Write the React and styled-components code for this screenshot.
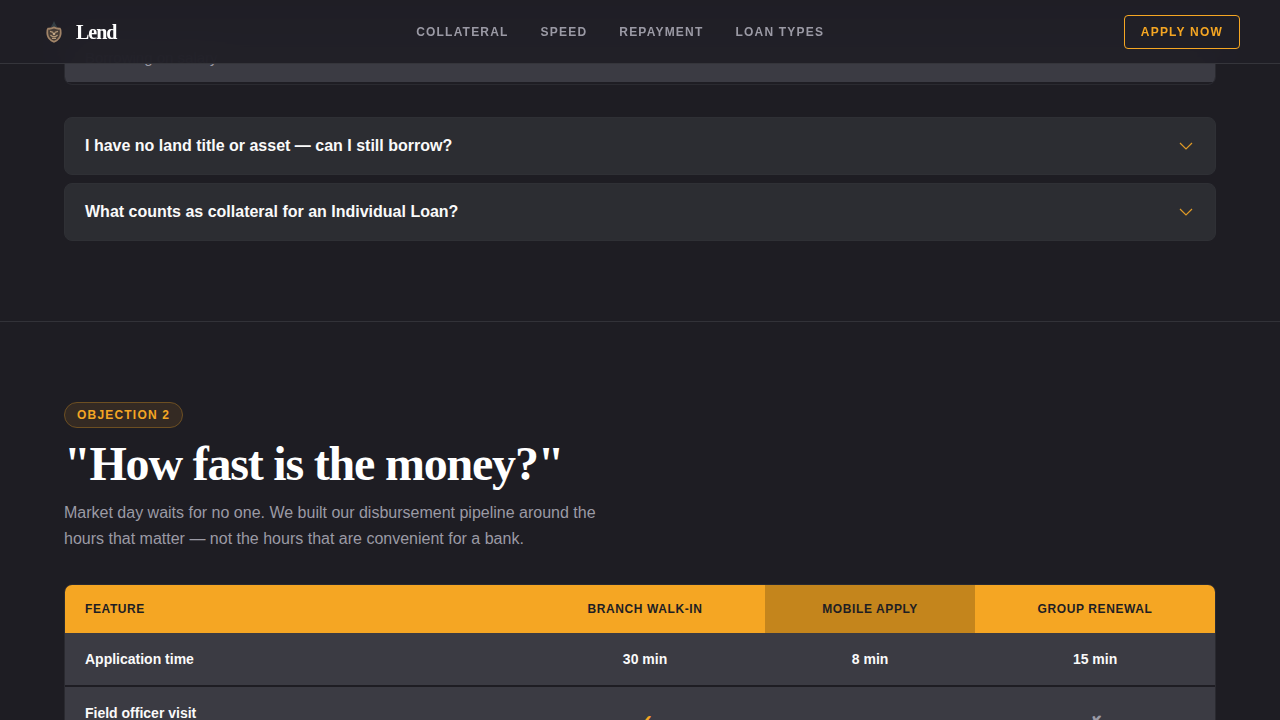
import React, { useState } from "react";
import styled, { createGlobalStyle } from "styled-components";

const faqs = [
    { q: "I have no land title or asset — can I still borrow?", a: "Yes. Group loans are backed by your fellow members." },
    { q: "What counts as collateral for an Individual Loan?", a: "Land titles, vehicles, equipment and market stock." },
];

const App = () => {
    const [open, setOpen] = useState(null);

    return(
    <>
        <GlobalStyle />
        <Header>
            <Brand href="#top">
                <Crest />
                Lend
            </Brand>
            <Nav>
                <NavLink href="#collateral">Collateral</NavLink>
                <NavLink href="#speed">Speed</NavLink>
                <NavLink href="#repayment">Repayment</NavLink>
                <NavLink href="#types">Loan Types</NavLink>
            </Nav>
            <ApplyLink href="#apply">Apply Now</ApplyLink>
        </Header>
        <main>
            <Section id="collateral" $first>
                <TableWrap>
                    <Table>
                        <tbody>
                            <tr>
                                <RowHead scope="row" $muted>Borrowing on salary</RowHead>
                            </tr>
                        </tbody>
                    </Table>
                </TableWrap>
                <FaqList>
                    {faqs.map((faq, i) => (
                        <FaqItem key={faq.q}>
                            <FaqButton
                                type="button"
                                aria-expanded={open === i}
                                onClick={() => setOpen(open === i ? null : i)}
                            >
                                {faq.q}
                                <Chevron viewBox="0 0 18 18" $open={open === i} aria-hidden="true">
                                    <path d="M3 6 L9 12 L15 6" />
                                </Chevron>
                            </FaqButton>
                            {open === i && <FaqAnswer>{faq.a}</FaqAnswer>}
                        </FaqItem>
                    ))}
                </FaqList>
            </Section>
            <Section id="speed">
                <Badge>Objection 2</Badge>
                <Title>"How fast is the money?"</Title>
                <Lead>
                    Market day waits for no one. We built our disbursement pipeline around the
                    hours that matter — not the hours that are convenient for a bank.
                </Lead>
                <TableWrap>
                    <Table>
                        <thead>
                            <tr>
                                <ColHead scope="col" $left>Feature</ColHead>
                                <ColHead scope="col">Branch Walk-in</ColHead>
                                <ColHead scope="col" $featured>Mobile Apply</ColHead>
                                <ColHead scope="col">Group Renewal</ColHead>
                            </tr>
                        </thead>
                        <tbody>
                            <tr>
                                <RowHead scope="row">Application time</RowHead>
                                <Cell>30 min</Cell>
                                <Cell>8 min</Cell>
                                <Cell>15 min</Cell>
                            </tr>
                            <tr>
                                <RowHead scope="row">
                                    Field officer visit
                                    <Note>First loan only</Note>
                                </RowHead>
                                <Cell><Mark $yes>✓</Mark></Cell>
                                <Cell><Mark>–</Mark></Cell>
                                <Cell><Mark>✗</Mark></Cell>
                            </tr>
                        </tbody>
                    </Table>
                </TableWrap>
            </Section>
        </main>
    </>
    );
}

const Crest = () => (
    <CrestSvg viewBox="0 0 28 28" aria-hidden="true">
        <path d="M14 3 L15.4 6 L17.4 9.5 H10.6 L12.6 6 Z" fill="#333e44" />
        <path d="M14 8.4 Q17 10 20.4 9.8 Q21.8 11 21.6 15 C21.4 19.6 18.6 23 14 24.8 C9.4 23 6.6 19.6 6.4 15 Q6.2 11 7.6 9.8 Q11 10 14 8.4 Z" fill="#a18468" />
        <path d="M14 10.6 Q17 11.8 19.6 11.6 Q20 13 19.8 15.4 C19.6 18.8 17.4 21.4 14 22.8 C10.6 21.4 8.4 18.8 8.2 15.4 Q8 13 8.4 11.6 Q11 11.8 14 10.6 Z" fill="#463c35" />
        <path d="M10 13.4 L13 14.4 M18 13.4 L15 14.4 M10.4 17 Q14 20.4 17.6 17 M12 20.4 H16" fill="none" stroke="#b39878" strokeWidth="1.2" />
        <circle cx="14" cy="15.8" r="1.4" fill="#c5aa88" />
    </CrestSvg>
);

const GlobalStyle = createGlobalStyle`
    *, *::before, *::after {
        box-sizing: border-box;
    }
    body {
        margin: 0;
        background: #1e1d23;
        color: #fafafa;
        font-family: "Liberation Sans", Arial, sans-serif;
        font-size: 16px;
    }
`;

const Header = styled.header`
    position: fixed;
    top: 0;
    left: 0;
    right: 0;
    z-index: 10;
    height: 64px;
    display: flex;
    align-items: center;
    justify-content: space-between;
    padding: 0 40px;
    background: rgba(32, 31, 38, 0.95);
    backdrop-filter: blur(16px);
    border-bottom: 1px solid #35353b;
`;

const Brand = styled.a`
    display: flex;
    align-items: center;
    gap: 8px;
    color: #fff;
    font-family: "Liberation Serif", "Times New Roman", serif;
    font-size: 20px;
    font-weight: 700;
    line-height: 24px;
    letter-spacing: -0.05em;
    text-decoration: none;
`;

const CrestSvg = styled.svg`
    width: 28px;
    height: 28px;
`;

const Nav = styled.nav`
    display: flex;
    gap: 32px;
`;

const NavLink = styled.a`
    color: #9b9aa5;
    font-size: 12px;
    font-weight: 700;
    letter-spacing: 0.1em;
    text-transform: uppercase;
    text-decoration: none;
`;

const ApplyLink = styled(NavLink)`
    padding: 9px 16px;
    border: 1px solid #f5a623;
    border-radius: 4px;
    color: #f5a623;
    line-height: 14px;
`;

const Section = styled.section`
    padding: ${(p) => (p.$first ? "29px" : "80px")} 64px 80px;
    border-bottom: 1px solid #323238;
`;

const Badge = styled.span`
    display: block;
    width: fit-content;
    padding: 5px 12px;
    border: 1px solid #6d4f22;
    border-radius: 13px;
    background: #342a23;
    color: #f5a623;
    font-size: 12px;
    font-weight: 700;
    line-height: 14px;
    letter-spacing: 0.1em;
    text-transform: uppercase;
`;

const Title = styled.h2`
    margin: 12px 0;
    color: #fff;
    font-family: "Liberation Serif", "Times New Roman", serif;
    font-size: 48px;
    line-height: 48px;
    letter-spacing: -0.025em;
`;

const Lead = styled.p`
    max-width: 560px;
    margin: 0 0 32px;
    color: #9b9aa5;
    line-height: 26px;
`;

const TableWrap = styled.div`
    overflow: hidden;
    border: 1px solid #2a2a30;
    border-radius: 8px;
`;

const Table = styled.table`
    width: 100%;
    border-spacing: 0;
    font-size: 14px;
    line-height: 20px;
`;

const ColHead = styled.th`
    width: ${(p) => (p.$left ? "40%" : "auto")};
    padding: 14px 20px;
    background: ${(p) => (p.$featured ? "#c4851c" : "#f5a623")};
    color: #1e1e23;
    font-size: 12px;
    letter-spacing: 0.05em;
    text-align: ${(p) => (p.$left ? "left" : "center")};
    text-transform: uppercase;
`;

const Cell = styled.td`
    padding: 16px 20px;
    border-bottom: 2px solid #1e1d23;
    background: #3b3b43;
    font-weight: 700;
    text-align: center;
`;

const RowHead = styled(Cell).attrs({ as: "th" })`
    padding: ${(p) => (p.$muted ? "18px 20px 14px" : "16px 20px")};
    color: ${(p) => (p.$muted ? "#9b9aa5" : "#fafafa")};
    font-size: ${(p) => (p.$muted ? "15px" : "14px")};
    font-weight: ${(p) => (p.$muted ? 400 : 700)};
    text-align: left;
`;

const Note = styled.small`
    display: block;
    color: #9b9aa5;
    font-size: 12px;
    font-weight: 400;
`;

const Mark = styled.span`
    color: ${(p) => (p.$yes ? "#f5a623" : "#9b9aa5")};
    font-size: ${(p) => (p.$yes ? "20px" : "18px")};
`;

const FaqList = styled.div`
    display: grid;
    gap: 8px;
    margin-top: 32px;
`;

const FaqItem = styled.div`
    border: 1px solid #2f3035;
    border-radius: 8px;
    background: #2c2d32;
`;

const FaqButton = styled.button`
    width: 100%;
    display: flex;
    align-items: center;
    justify-content: space-between;
    padding: 18px 20px;
    border: none;
    background: none;
    color: #fafafa;
    font: inherit;
    font-weight: 700;
    line-height: 20px;
    text-align: left;
    cursor: pointer;
`;

const Chevron = styled.svg`
    width: 18px;
    height: 18px;
    fill: none;
    stroke: #e09a26;
    stroke-width: 1.2;
    transform: ${(p) => (p.$open ? "rotate(180deg)" : "none")};
`;

const FaqAnswer = styled.p`
    margin: 0;
    padding: 0 20px 20px;
    color: #9b9aa5;
    line-height: 26px;
`;

export default App;
